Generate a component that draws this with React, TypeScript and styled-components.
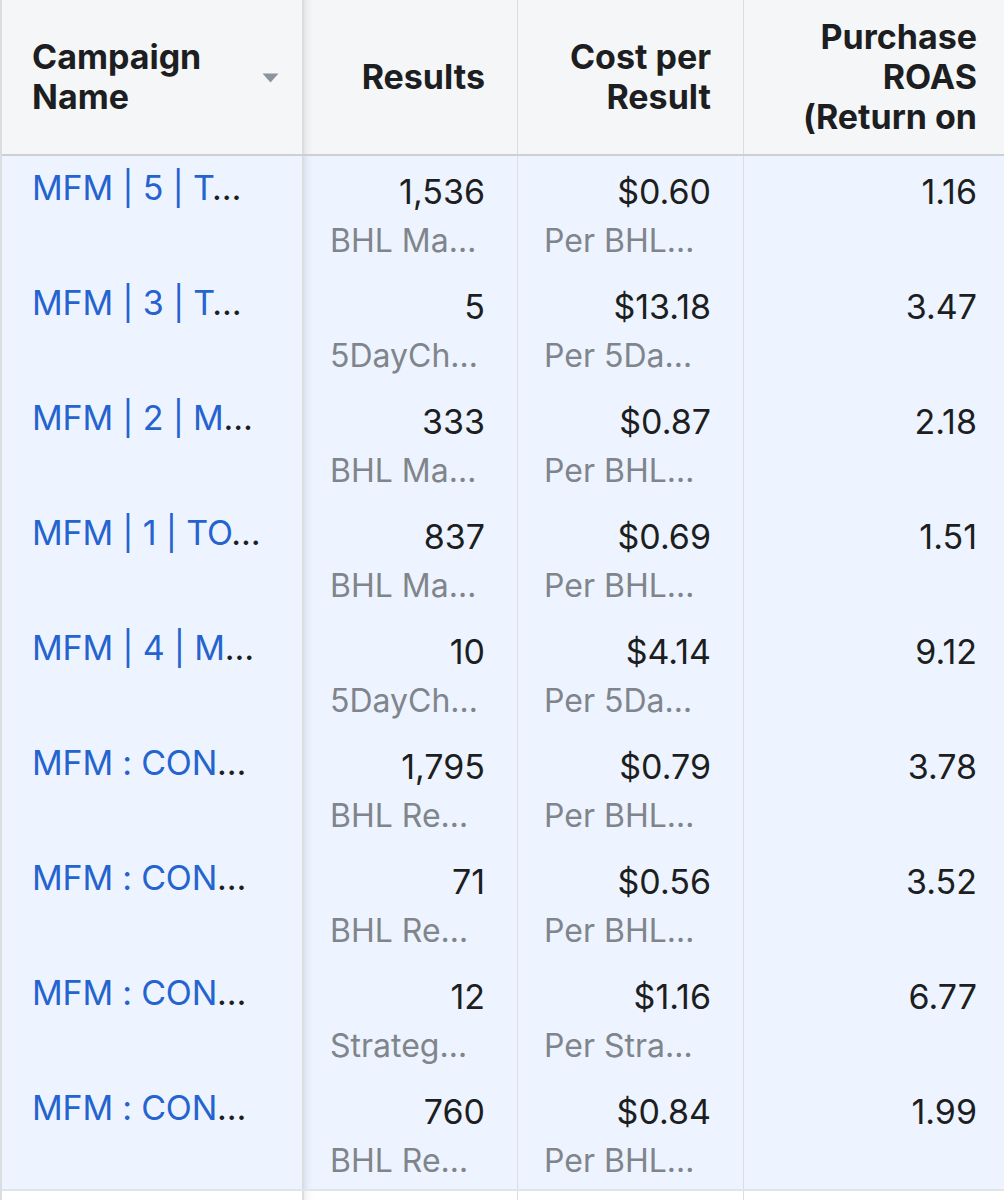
import React from "react";
import styled, { createGlobalStyle } from "styled-components";

const GlobalStyle = createGlobalStyle`
  html, body {
    margin: 0;
    padding: 0;
    background: #ffffff;
    overflow: hidden;
  }
  body {
    font-family: Inter, "Noto Sans", "Liberation Sans", sans-serif;
    color: #1c1e21;
    -webkit-font-smoothing: antialiased;
  }
`;

const Table = styled.div`
  width: 1004px;
  box-sizing: border-box;
  border-left: 2px solid #dadde1;
  display: flex;
  flex-direction: column;
`;

const Row = styled.div<{ $variant: "header" | "selected" | "plain"; $last?: boolean }>`
  display: grid;
  grid-template-columns: 302px 214px 226px 1fr;
  height: ${(p) => (p.$variant === "header" ? "156px" : p.$variant === "plain" ? "40px" : "115px")};
  box-sizing: border-box;
  background: ${(p) =>
    p.$variant === "header" ? "#f5f6f7" : p.$variant === "selected" ? "#edf4ff" : "#ffffff"};
  border-bottom: ${(p) =>
    p.$variant === "header"
      ? "2px solid #ccd0d5"
      : p.$last
      ? "2px solid #e1e4e8"
      : "0"};
`;

const BaseCell = styled.div<{ $frozen?: boolean; $afterFrozen?: boolean; $lastCol?: boolean }>`
  box-sizing: border-box;
  min-width: 0;
  border-right: ${(p) => (p.$frozen ? "2px solid #dadde1" : p.$lastCol ? "0" : "1px solid #dadde1")};
  padding-left: ${(p) => (p.$frozen ? "30px" : "26px")};
  padding-right: ${(p) => (p.$frozen ? "23px" : p.$lastCol ? "27px" : "32px")};
  background-image: ${(p) =>
    p.$afterFrozen
      ? "linear-gradient(to right, rgba(0,0,0,0.07), rgba(0,0,0,0.025) 4px, rgba(0,0,0,0) 10px)"
      : "none"};
`;

const HeadCell = styled(BaseCell)<{ $numeric?: boolean }>`
  display: flex;
  align-items: center;
  justify-content: ${(p) => (p.$numeric ? "flex-end" : "space-between")};
  gap: 12px;
`;

const HeadLabel = styled.div<{ $numeric?: boolean; $maxWidth?: number }>`
  font-size: 34px;
  line-height: 40px;
  font-weight: 700;
  color: #1c1e21;
  text-align: ${(p) => (p.$numeric ? "right" : "left")};
  max-height: 120px;
  overflow: hidden;
  max-width: ${(p) => (p.$maxWidth ? `${p.$maxWidth}px` : "none")};
`;

const SortCaret = styled.svg`
  flex: none;
  width: 17px;
  height: 10px;
  margin-top: 2px;
`;

const BodyCell = styled(BaseCell)`
  display: flex;
  flex-direction: column;
  padding-top: 16px;
`;

const NameCell = styled(BaseCell)`
  padding-top: 12px;
`;

const NameText = styled.div`
  font-size: 34px;
  line-height: 40px;
  letter-spacing: -0.2px;
  white-space: nowrap;
  overflow: hidden;
  text-overflow: ellipsis;
  color: #1c1e21;
`;

const NameLink = styled.a`
  color: #2563cf;
  text-decoration: none;
  cursor: pointer;
`;

const Value = styled.div`
  font-size: 34px;
  line-height: 40px;
  text-align: right;
  color: #1c1e21;
  white-space: nowrap;
`;

const SubText = styled.div`
  margin-top: 9px;
  font-size: 32px;
  line-height: 40px;
  color: #80858b;
  white-space: nowrap;
  overflow: hidden;
  text-overflow: ellipsis;
  text-align: left;
`;

type Campaign = {
  name: string;
  results: string;
  resultType: string;
  cost: string;
  costType: string;
  roas: string;
};

const campaigns: Campaign[] = [
  { name: "MFM | 5 | T", results: "1,536", resultType: "BHL Ma…", cost: "$0.60", costType: "Per BHL…", roas: "1.16" },
  { name: "MFM | 3 | T", results: "5", resultType: "5DayCh…", cost: "$13.18", costType: "Per 5Da…", roas: "3.47" },
  { name: "MFM | 2 | M", results: "333", resultType: "BHL Ma…", cost: "$0.87", costType: "Per BHL…", roas: "2.18" },
  { name: "MFM | 1 | TO", results: "837", resultType: "BHL Ma…", cost: "$0.69", costType: "Per BHL…", roas: "1.51" },
  { name: "MFM | 4 | M", results: "10", resultType: "5DayCh…", cost: "$4.14", costType: "Per 5Da…", roas: "9.12" },
  { name: "MFM : CON", results: "1,795", resultType: "BHL Re…", cost: "$0.79", costType: "Per BHL…", roas: "3.78" },
  { name: "MFM : CON", results: "71", resultType: "BHL Re…", cost: "$0.56", costType: "Per BHL…", roas: "3.52" },
  { name: "MFM : CON", results: "12", resultType: "Strateg…", cost: "$1.16", costType: "Per Stra…", roas: "6.77" },
  { name: "MFM : CON", results: "760", resultType: "BHL Re…", cost: "$0.84", costType: "Per BHL…", roas: "1.99" },
];

export default function App() {
  return (
    <>
      <GlobalStyle />
      <Table>
        <Row $variant="header">
          <HeadCell $frozen>
            <HeadLabel $maxWidth={200}>Campaign Name</HeadLabel>
            <SortCaret viewBox="0 0 17 10" aria-hidden="true">
              <path d="M0.5 0.5 H16.5 L8.5 9.5 Z" fill="#8d949e" />
            </SortCaret>
          </HeadCell>
          <HeadCell $numeric $afterFrozen>
            <HeadLabel $numeric>Results</HeadLabel>
          </HeadCell>
          <HeadCell $numeric>
            <HeadLabel $numeric>Cost per Result</HeadLabel>
          </HeadCell>
          <HeadCell $numeric $lastCol>
            <HeadLabel $numeric>Purchase ROAS (Return on</HeadLabel>
          </HeadCell>
        </Row>
        {campaigns.map((c, i) => (
          <Row key={i} $variant="selected" $last={i === campaigns.length - 1}>
            <NameCell $frozen>
              <NameText>
                <NameLink>{c.name}</NameLink>…
              </NameText>
            </NameCell>
            <BodyCell $afterFrozen>
              <Value>{c.results}</Value>
              <SubText>{c.resultType}</SubText>
            </BodyCell>
            <BodyCell>
              <Value>{c.cost}</Value>
              <SubText>{c.costType}</SubText>
            </BodyCell>
            <BodyCell $lastCol>
              <Value>{c.roas}</Value>
            </BodyCell>
          </Row>
        ))}
        <Row $variant="plain">
          <BaseCell $frozen />
          <BaseCell $afterFrozen />
          <BaseCell />
          <BaseCell $lastCol />
        </Row>
      </Table>
    </>
  );
}
